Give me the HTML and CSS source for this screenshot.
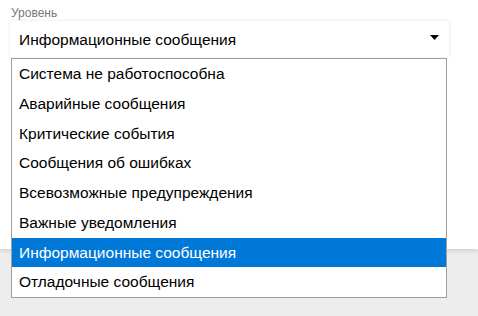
FILE: index.html
```html
<!DOCTYPE html>
<html lang="ru">
<head>
<meta charset="utf-8">
<link rel="stylesheet" href="styles.css">
</head>
<body>
<div class="panel">
  <div class="field">
    <div class="label">Уровень</div>
    <div class="select">
      <span class="value">Информационные сообщения</span>
      <svg class="arrow" width="9" height="5" viewBox="0 0 9 5"><path d="M0 0h9L4.5 5z" fill="#000"/></svg>
    </div>
    <ul class="menu">
      <li>Система не работоспособна</li>
      <li>Аварийные сообщения</li>
      <li>Критические события</li>
      <li>Сообщения об ошибках</li>
      <li>Всевозможные предупреждения</li>
      <li>Важные уведомления</li>
      <li class="selected">Информационные сообщения</li>
      <li>Отладочные сообщения</li>
    </ul>
  </div>
</div>
</body>
</html>
```
FILE: styles.css
```css
html, body {
  margin: 0;
  padding: 0;
}
body {
  width: 478px;
  height: 316px;
  background: #ededed;
  font-family: "Liberation Sans", Arial, sans-serif;
  overflow: hidden;
}
.panel {
  background: #fff;
  height: 249px;
  box-shadow: 0 2px 4px rgba(0,0,0,0.12);
  padding: 6px 29px 0 10px;
  box-sizing: border-box;
}
.field {
  position: relative;
}
.label {
  font-size: 12px;
  color: #777;
  padding-left: 1px;
  height: 15px;
  line-height: 15px;
}
.select {
  height: 36px;
  background: #fff;
  box-shadow: 0 0 3px rgba(0,0,0,0.12);
  display: flex;
  align-items: center;
  justify-content: space-between;
  padding: 0 10px 0 9px;
  font-size: 15.5px;
  color: #000;
}
.value {
  padding-top: 2px;
}
.arrow {
  display: block;
  margin-top: -4px;
}
.menu {
  position: absolute;
  left: 1px;
  top: 52px;
  width: 434px;
  margin: 0;
  padding: 0;
  list-style: none;
  background: #fff;
  border: 1px solid #a0a0a0;
}
.menu li {
  height: 29.75px;
  line-height: 29.75px;
  padding-left: 7px;
  font-size: 15.5px;
  color: #000;
}
.menu li.selected {
  background: #0078d7;
  color: #fff;
}
```
